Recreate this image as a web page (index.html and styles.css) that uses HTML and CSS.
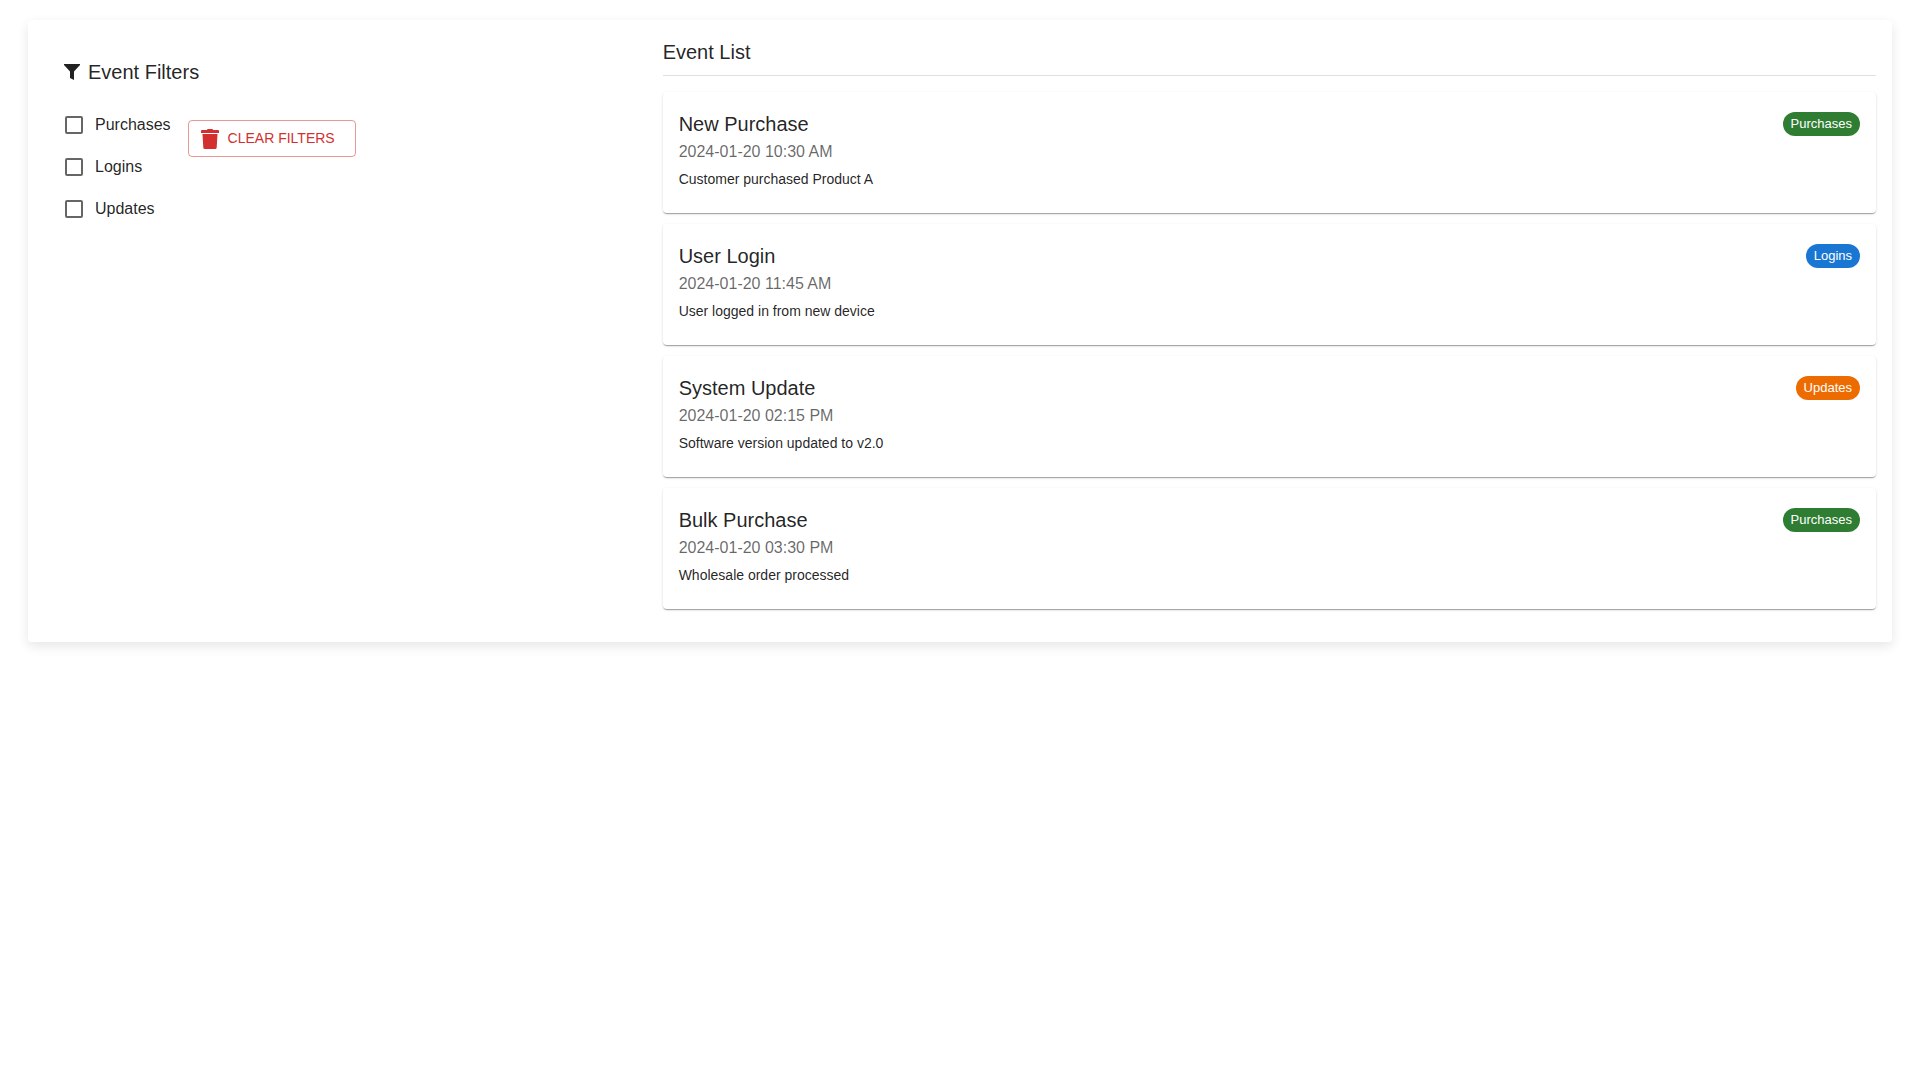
FILE: index.html
```html
<!DOCTYPE html>
<html lang="en">
<head>
<meta charset="utf-8">
<meta name="viewport" content="width=device-width, initial-scale=1.0">
<title>Event Filters</title>
<link rel="stylesheet" href="styles.css">
</head>
<body>

<main class="paper">
  <section class="filters">
    <h2 class="title filters-title">
      <svg class="icon-filter" viewBox="0 0 16 16" aria-hidden="true"><path d="M0 0h16v1L10 7.500V16L6 14V7.500L0 1z"/></svg>
      Event Filters
    </h2>
    <div class="filters-row">
      <div class="checks">
        <label class="check"><input type="checkbox" name="purchases">Purchases</label>
        <label class="check"><input type="checkbox" name="logins">Logins</label>
        <label class="check"><input type="checkbox" name="updates">Updates</label>
      </div>
      <button class="clear" type="button">
        <svg class="icon-trash" viewBox="0 0 18 20" aria-hidden="true"><path d="M0 2q0-1 1-1h5q0-1 1-1h4q1 0 1 1h5q1 0 1 1v2H0zM1.500 5h15l-.8 13.500q-.1 1.500-1.500 1.500H3.800q-1.400 0-1.500-1.500z"/></svg>
        CLEAR FILTERS
      </button>
    </div>
  </section>

  <section class="events">
    <h2 class="title events-title">Event List</h2>
    <ul class="list">
      <li class="card">
        <div class="card-head">
          <h3 class="title">New Purchase</h3>
          <span class="chip chip-purchases">Purchases</span>
        </div>
        <p class="date">2024-01-20 10:30 AM</p>
        <p class="text">Customer purchased Product A</p>
      </li>
      <li class="card">
        <div class="card-head">
          <h3 class="title">User Login</h3>
          <span class="chip chip-logins">Logins</span>
        </div>
        <p class="date">2024-01-20 11:45 AM</p>
        <p class="text">User logged in from new device</p>
      </li>
      <li class="card">
        <div class="card-head">
          <h3 class="title">System Update</h3>
          <span class="chip chip-updates">Updates</span>
        </div>
        <p class="date">2024-01-20 02:15 PM</p>
        <p class="text">Software version updated to v2.0</p>
      </li>
      <li class="card">
        <div class="card-head">
          <h3 class="title">Bulk Purchase</h3>
          <span class="chip chip-purchases">Purchases</span>
        </div>
        <p class="date">2024-01-20 03:30 PM</p>
        <p class="text">Wholesale order processed</p>
      </li>
    </ul>
  </section>
</main>

</body>
</html>
```
FILE: styles.css
```css
* {
  box-sizing: border-box;
}

body {
  margin: 0;
  padding: 20px 28px;
  background-color: #fff;
  color: rgba(0, 0, 0, 0.87);
  font-family: "Liberation Sans", Arial, sans-serif;
  font-size: 16px;
  line-height: 24px;
}

.paper {
  display: grid;
  grid-template-columns: calc(100% / 3 - 16px) 1fr;
  gap: 24px;
  padding: 16px;
  border-radius: 4px;
  background-color: #fff;
  box-shadow: 0 4px 12px rgba(0, 0, 0, 0.1);
}

.title {
  margin: 0;
  font-size: 20px;
  font-weight: normal;
  line-height: 32px;
}

/* filters */
.filters {
  padding: 20px;
}

.filters-title {
  display: flex;
  align-items: center;
  gap: 8px;
  margin-bottom: 16px;
}

.icon-filter {
  width: 16px;
  height: 16px;
  fill: currentColor;
}

.filters-row {
  display: flex;
  align-items: flex-start;
  gap: 17px;
}

.check {
  display: flex;
  align-items: center;
  gap: 12px;
  height: 42px;
  cursor: pointer;
}

.check input {
  appearance: none;
  width: 18px;
  height: 18px;
  margin: 0 0 0 1px;
  border: 2px solid rgba(0, 0, 0, 0.6);
  border-radius: 2px;
  cursor: pointer;
}

.check input:checked {
  border-color: #1976d2;
  background-color: #1976d2;
}

.clear {
  display: flex;
  align-items: center;
  gap: 9px;
  margin-top: 16px;
  padding: 5px 20px 5px 12px;
  border: 1px solid rgba(211, 47, 47, 0.5);
  border-radius: 4px;
  background-color: transparent;
  color: #d32f2f;
  font-family: inherit;
  font-size: 14px;
  line-height: 25px;
  cursor: pointer;
}

.clear:hover {
  border-color: #d32f2f;
}

.icon-trash {
  width: 18px;
  height: 20px;
  fill: currentColor;
}

/* events */
.events-title {
  padding-bottom: 7px;
  border-bottom: 1px solid rgba(0, 0, 0, 0.12);
}

.list {
  display: flex;
  flex-direction: column;
  gap: 11px;
  margin: 0;
  padding: 16px 0 17px;
  list-style: none;
}

.card {
  padding: 16px 16px 24px;
  border-radius: 4px;
  background-color: #fff;
  box-shadow: 0 2px 1px -1px rgba(0, 0, 0, 0.2), 0 1px 1px 0 rgba(0, 0, 0, 0.14), 0 1px 3px 0 rgba(0, 0, 0, 0.12);
}

.card-head {
  display: flex;
  align-items: center;
  justify-content: space-between;
}

.date {
  margin: 0 0 5px;
  color: rgba(0, 0, 0, 0.6);
}

.text {
  margin: 0;
  font-size: 14px;
  line-height: 20px;
}

.chip {
  padding: 0 8px;
  border-radius: 16px;
  color: #fff;
  font-size: 13px;
  line-height: 24px;
}

.chip-purchases {
  background-color: #2e7d32;
}

.chip-logins {
  background-color: #1976d2;
}

.chip-updates {
  background-color: #ed6c02;
}
```
